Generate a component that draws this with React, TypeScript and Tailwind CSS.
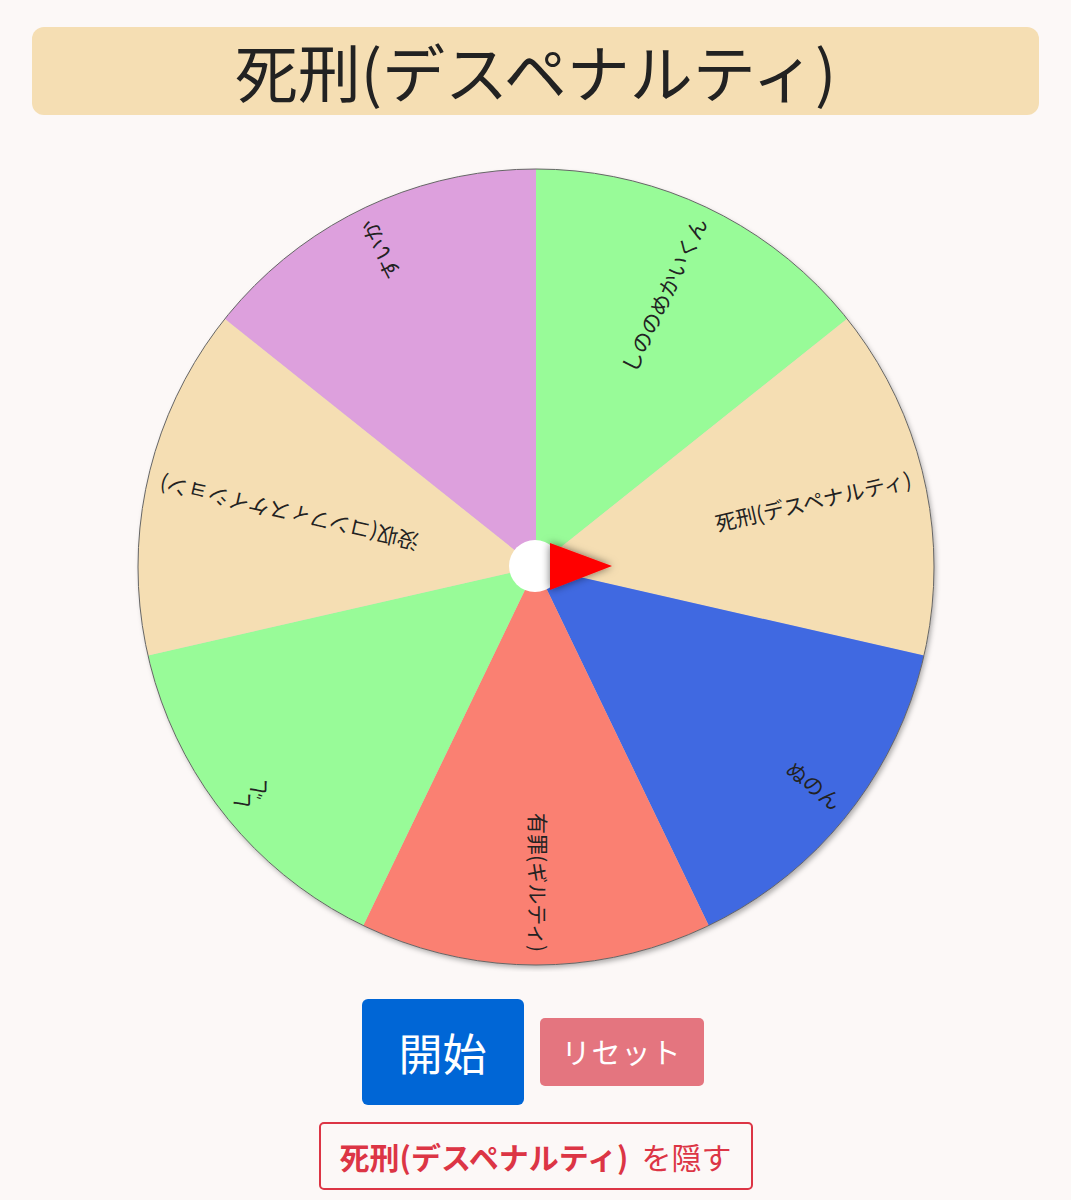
import React from 'react';

const R = 398;

const segments = [
  { label: 'しののめかいくん', color: '#98fb98' },
  { label: '死刑(デスペナルティ)', color: '#f5deb3' },
  { label: 'ぬのん', color: '#4169e1' },
  { label: '有罪(ギルティ)', color: '#fa8072' },
  { label: 'べへ', color: '#98fb98' },
  { label: '没収(コンフィスケイション)', color: '#f5deb3' },
  { label: 'すいか', color: '#dda0dd' },
];

function Wheel() {
  const step = 360 / segments.length;
  const pt = (deg: number) => {
    const rad = (deg * Math.PI) / 180;
    return `${(R * Math.cos(rad)).toFixed(2)} ${(R * Math.sin(rad)).toFixed(2)}`;
  };

  return (
    <svg width={810} height={810} viewBox="-405 -405 810 810">
      <defs>
        <filter id="wheelShadow" x="-10%" y="-10%" width="120%" height="120%">
          <feDropShadow dx="2" dy="3" stdDeviation="2.5" floodOpacity="0.3" />
        </filter>
        <filter id="pinShadow" x="-50%" y="-50%" width="200%" height="200%">
          <feDropShadow dx="0" dy="0" stdDeviation="4" floodOpacity="0.55" />
        </filter>
      </defs>
      <g filter="url(#wheelShadow)">
        {segments.map((s, i) => {
          const a0 = -90 + i * step;
          const a1 = a0 + step;
          return (
            <path
              key={i}
              d={`M0 0 L${pt(a0)} A${R} ${R} 0 0 1 ${pt(a1)} Z`}
              fill={s.color}
            />
          );
        })}
      </g>
      <circle r={R} fill="none" stroke="#666" strokeWidth={1} />
      {segments.map((s, i) => {
        const mid = -90 + i * step + step / 2;
        return (
          <text
            key={i}
            transform={`rotate(${mid})`}
            x={385}
            y={0}
            textAnchor="end"
            dominantBaseline="middle"
            fontSize={21}
            fill="#222"
          >
            {s.label}
          </text>
        );
      })}
      {/* pointer */}
      <circle cx={-1} cy={-1} r={26} fill="#fff" />
      <polygon points="14,-24 14,23 76,-1" fill="#ff0000" filter="url(#pinShadow)" />
    </svg>
  );
}

export default function App() {
  return (
    <div className="min-h-screen bg-[#fcf8f7] pt-[27px] pb-[10px] font-['Noto_Sans_CJK_JP',sans-serif]">
      <div className="mx-auto flex h-[88px] w-[1007px] items-center justify-center rounded-[12px] bg-[#f5deb3] pb-[4px] text-[63px] leading-none text-[#222]">
        死刑(デスペナルティ)
      </div>

      <div className="mt-[47px] flex justify-center">
        <Wheel />
      </div>

      <div className="mt-[27px] flex items-center justify-center gap-[16px] pr-[6px]">
        <button className="flex h-[106px] w-[162px] items-center justify-center rounded-[6px] bg-[#0066d6] text-[44px] text-white">
          開始
        </button>
        <button className="flex h-[68px] w-[164px] items-center justify-center rounded-[5px] bg-[#e4757f] text-[29px] tracking-[1px] text-white">
          リセット
        </button>
      </div>

      <div className="mt-[17px] flex justify-center">
        <button className="flex h-[68px] w-[434px] items-center justify-center rounded-[5px] border-2 border-[#dc3545] text-[30px] text-[#dc3545]">
          <span className="font-bold">死刑(デスペナルティ)</span>
          <span className="ml-[13px]">を隠す</span>
        </button>
      </div>
    </div>
  );
}
